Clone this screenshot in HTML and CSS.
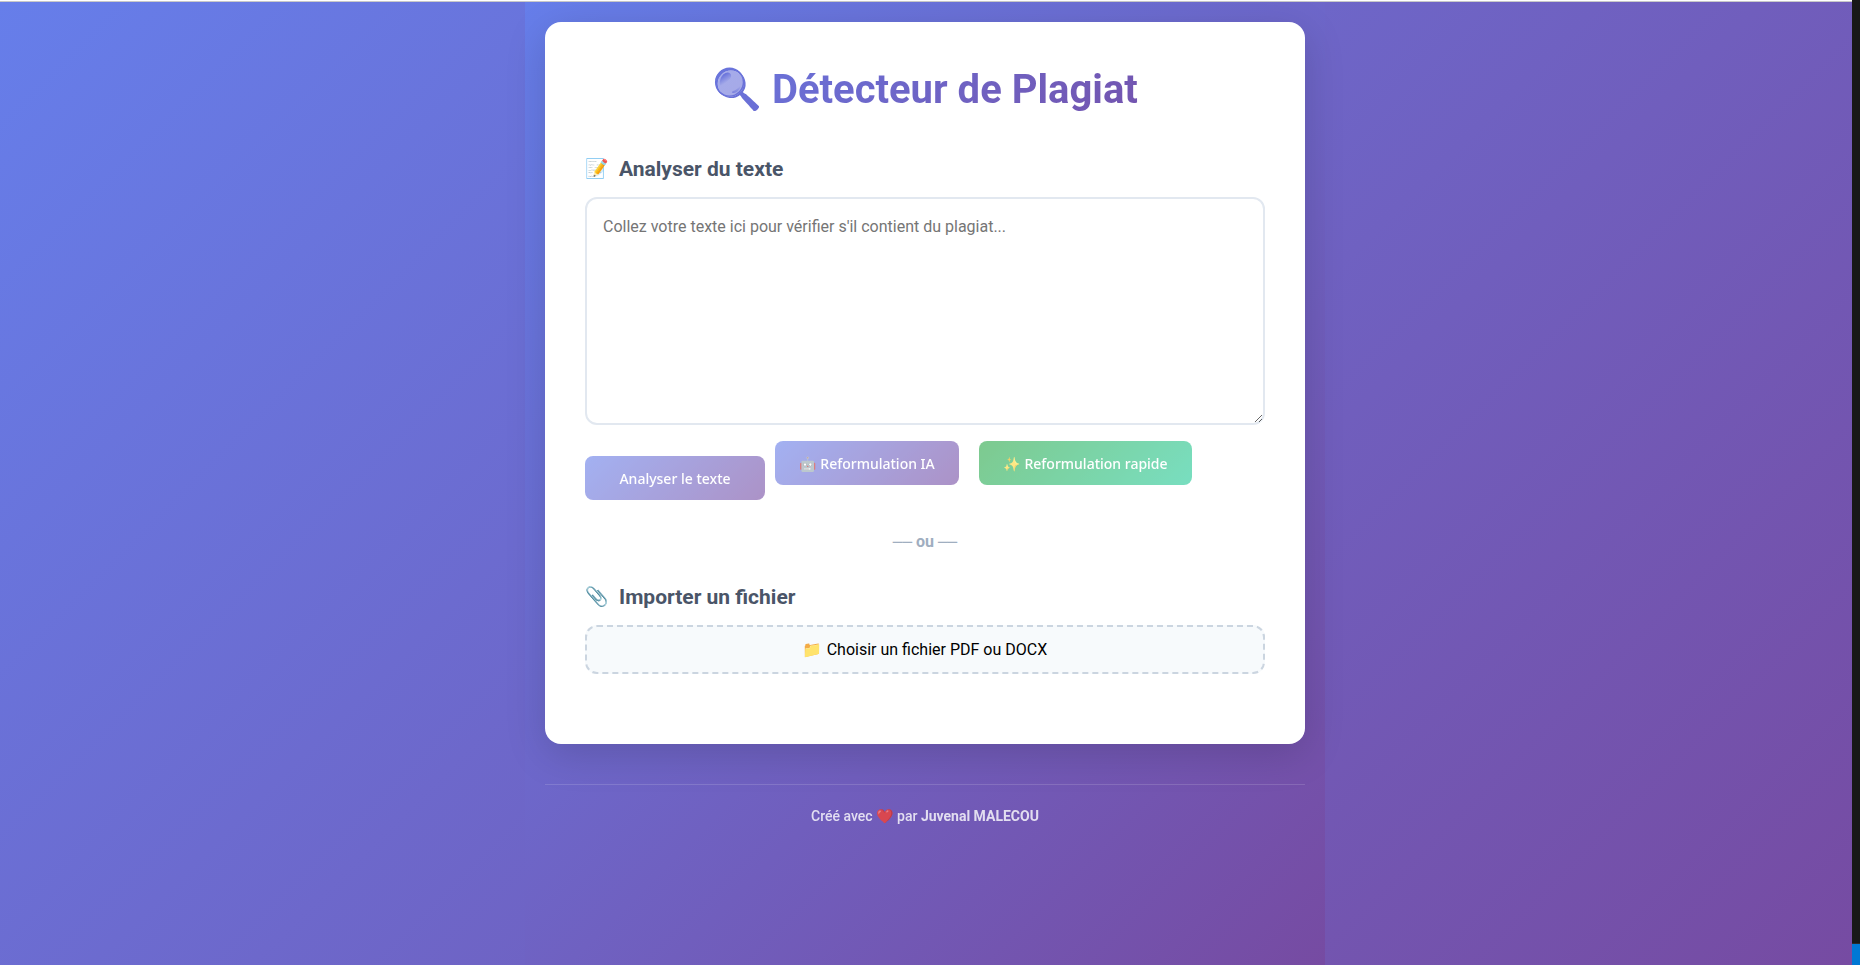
FILE: index.html
```html
<!DOCTYPE html>
<html lang="fr">
<head>
<meta charset="utf-8">
<title>Détecteur de Plagiat</title>
<link rel="stylesheet" href="styles.css">
</head>
<body>
<div class="window">
  <div class="page">
    <div class="container">
      <main class="card">
        <h1 class="title">🔍 Détecteur de Plagiat</h1>
        <section class="section">
          <h2 class="heading"><span class="icon">📝</span><label for="texte">Analyser du texte</label></h2>
          <textarea id="texte" class="text-input" placeholder="Collez votre texte ici pour vérifier s'il contient du plagiat..."></textarea>
          <div class="actions">
            <button type="button" class="btn btn-analyse">Analyser le texte</button>
            <button type="button" class="btn btn-ai">🤖 Reformulation IA</button>
            <button type="button" class="btn btn-quick">✨ Reformulation rapide</button>
          </div>
        </section>
        <div class="divider"><span class="rule">──</span> ou <span class="rule">──</span></div>
        <section class="section">
          <h2 class="heading"><span class="icon">📎</span>Importer un fichier</h2>
          <input type="file" id="fichier" class="file-input" accept=".pdf,.docx">
          <label for="fichier" class="file-label">📁 Choisir un fichier PDF ou DOCX</label>
        </section>
      </main>
      <footer class="footer"><p class="credit">Créé avec ❤️ par <strong>Juvenal MALECOU</strong></p></footer>
    </div>
  </div>
</div>
<div class="edge"><div class="edge-accent"></div></div>
</body>
</html>
```
FILE: styles.css
```css
* { box-sizing: border-box; margin: 0; padding: 0; }

body {
  display: flex;
  min-height: 100vh;
  font-family: Roboto, "Noto Color Emoji", sans-serif;
  font-size: 16px;
  line-height: 24px;
  color: #000;
}

.window {
  flex: 1;
  display: flex;
  border-top: 1px solid #fff;
}

.page {
  flex: 1;
  display: flex;
  justify-content: center;
  padding-right: 2px;
  border-top: 1px solid #c8c8c8;
  background: linear-gradient(135deg, #667eea 0%, #764ba2 100%);
}

.container {
  width: 100%;
  max-width: 800px;
  padding: 20px;
  background: linear-gradient(135deg, #667eea 0%, #764ba2 100%);
}

.card {
  padding: 40px;
  background: #fff;
  border-radius: 16px;
  box-shadow: 0 10px 40px rgba(0, 0, 0, 0.15);
}

.title {
  margin-bottom: 35px;
  font-size: 40px;
  line-height: 56px;
  font-weight: 700;
  text-align: center;
  background: linear-gradient(135deg, #667eea 0%, #764ba2 100%);
  -webkit-background-clip: text;
  background-clip: text;
  color: transparent;
}

.section { margin-bottom: 30px; }

.heading {
  display: flex;
  gap: 8px;
  margin-bottom: 12px;
  font-size: 21px;
  line-height: 32px;
  font-weight: 700;
  color: #4a5568;
}

.icon { width: 26px; font-size: 19px; }

.text-input {
  display: block;
  width: 100%;
  height: 228px;
  padding: 16px;
  border: 2px solid #e2e8f0;
  border-radius: 12px;
  font: inherit;
  resize: vertical;
}

.text-input::placeholder { color: #757575; }

.actions {
  display: flex;
  align-items: flex-start;
  flex-wrap: wrap;
  margin-top: 16px;
}

.btn {
  height: 44px;
  border: 0;
  border-radius: 8px;
  font-family: "Noto Sans", "Noto Color Emoji", sans-serif;
  font-size: 14px;
  font-weight: 500;
  color: #fff;
  opacity: 0.6;
  background: linear-gradient(135deg, #667eea 0%, #764ba2 100%);
}

.btn-analyse { width: 180px; margin: 15px 10px 0 0; }
.btn-ai { width: 184px; margin-right: 20px; }
.btn-quick { width: 213px; background: linear-gradient(135deg, #28a745 0%, #20c997 100%); }

.divider {
  margin-bottom: 26px;
  font-weight: 700;
  text-align: center;
  color: #a0aec0;
}

.rule {
  font-family: "Liberation Mono", monospace;
  font-weight: 400;
}

.file-input {
  position: absolute;
  width: 1px;
  height: 1px;
  opacity: 0;
}

.file-label {
  display: block;
  padding: 11px 16px;
  border: 2px dashed #cbd5e0;
  border-radius: 12px;
  background: #f7fafc;
  line-height: 23px;
  text-align: center;
  cursor: pointer;
}

.footer {
  margin-top: 40px;
  padding: 20px;
  border-top: 1px solid rgba(255, 255, 255, 0.14);
}

.credit {
  font-size: 14px;
  line-height: 22px;
  font-weight: 500;
  text-align: center;
  color: #fff;
  opacity: 0.8;
}

.edge {
  display: flex;
  flex-direction: column;
  justify-content: flex-end;
  width: 8px;
  background: #181818;
}

.edge-accent { height: 22px; border-top: 1px solid #2b2b2b; background: #0078d4; }
```
